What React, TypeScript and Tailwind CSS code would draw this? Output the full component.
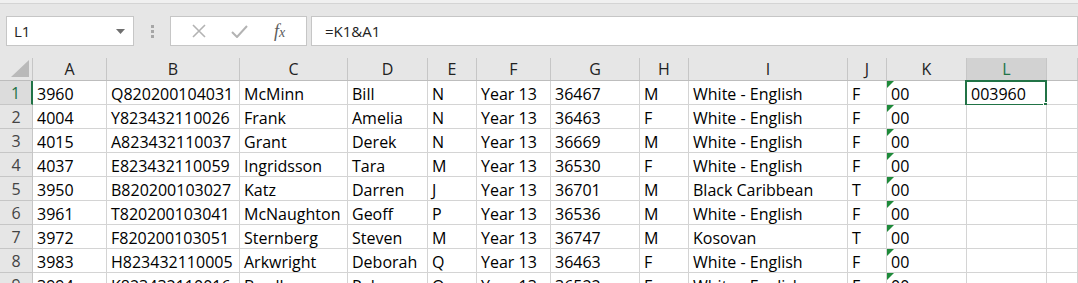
import type { ReactNode } from "react"

const cols = [
  { key: "A", w: "w-[74px]" },
  { key: "B", w: "w-[133px]" },
  { key: "C", w: "w-[108px]" },
  { key: "D", w: "w-[80px]" },
  { key: "E", w: "w-[49px]" },
  { key: "F", w: "w-[74px]" },
  { key: "G", w: "w-[89px]" },
  { key: "H", w: "w-[49px]" },
  { key: "I", w: "w-[159px]" },
  { key: "J", w: "w-[39px]" },
  { key: "K", w: "w-[80px]" },
  { key: "L", w: "w-[80px]" },
  { key: "M", w: "w-[31px]" },
]

const rows: string[][] = [
  ["3960", "Q820200104031", "McMinn", "Bill", "N", "Year 13", "36467", "M", "White - English", "F", "00", "003960", ""],
  ["4004", "Y823432110026", "Frank", "Amelia", "N", "Year 13", "36463", "F", "White - English", "F", "00", "", ""],
  ["4015", "A823432110037", "Grant", "Derek", "N", "Year 13", "36669", "M", "White - English", "F", "00", "", ""],
  ["4037", "E823432110059", "Ingridsson", "Tara", "M", "Year 13", "36530", "F", "White - English", "F", "00", "", ""],
  ["3950", "B820200103027", "Katz", "Darren", "J", "Year 13", "36701", "M", "Black Caribbean", "T", "00", "", ""],
  ["3961", "T820200103041", "McNaughton", "Geoff", "P", "Year 13", "36536", "M", "White - English", "F", "00", "", ""],
  ["3972", "F820200103051", "Sternberg", "Steven", "M", "Year 13", "36747", "M", "Kosovan", "T", "00", "", ""],
  ["3983", "H823432110005", "Arkwright", "Deborah", "Q", "Year 13", "36463", "F", "White - English", "F", "00", "", ""],
  ["3994", "K823432110016", "Bradley", "Rebecca", "Q", "Year 13", "36522", "F", "White - English", "F", "00", "", ""],
]

function Box({ className, children }: { className: string; children: ReactNode }) {
  return (
    <div className={`h-[30px] bg-white border border-[#c6c6c6] flex items-center ${className}`}>
      {children}
    </div>
  )
}

function ErrorMark() {
  return (
    <svg className="absolute left-0 top-0" width="7" height="7" viewBox="0 0 7 7">
      <polygon points="0,0 7,0 0,7" fill="#1e8a3a" />
    </svg>
  )
}

export default function App() {
  return (
    <div
      className="w-[1078px] h-[283px] overflow-hidden bg-[#e6e6e6] text-[#000]"
      style={{ fontFamily: '"Open Sans", "Liberation Sans", sans-serif' }}
    >
      {/* TOP STRIP */}
      <div className="h-[4px] bg-[#f0f0f0] border-b border-[#d4d4d4]" />

      {/* FORMULA BAR */}
      <div className="h-[54px] flex items-start pt-[12px] pl-[6px]">
        <Box className="w-[128px] shrink-0 justify-between pl-[7px] pr-[8px]">
          <span className="text-[15px] text-[#222]">L1</span>
          <svg width="9" height="5" viewBox="0 0 9 5">
            <polygon points="0,0 9,0 4.5,5" fill="#6f6f6f" />
          </svg>
        </Box>

        <div className="w-[36px] shrink-0 h-[30px] flex flex-col items-center justify-center gap-[2px]">
          <span className="w-[3px] h-[3px] bg-[#a6a6a6]" />
          <span className="w-[3px] h-[3px] bg-[#a6a6a6]" />
          <span className="w-[3px] h-[3px] bg-[#a6a6a6]" />
        </div>

        <Box className="w-[137px] shrink-0 justify-around px-[8px]">
          <svg width="14" height="14" viewBox="0 0 14 14">
            <path d="M1 1 L13 13 M13 1 L1 13" stroke="#b3b3b3" strokeWidth="1.6" />
          </svg>
          <svg width="17" height="13" viewBox="0 0 17 13">
            <path d="M1 7 L6 12 L16 1" stroke="#b3b3b3" strokeWidth="2" fill="none" />
          </svg>
          <span
            className="text-[18px] italic text-[#5b5b5b] leading-none"
            style={{ fontFamily: '"Liberation Serif", serif' }}
          >
            f<span className="text-[14px]">x</span>
          </span>
        </Box>

        <Box className="ml-[4px] flex-1 pl-[13px]">
          <span className="text-[15px] text-[#222]">=K1&amp;A1</span>
        </Box>
      </div>

      {/* GRID */}
      <div className="flex flex-col">

        {/* COLUMN HEADERS */}
        <div className="flex h-[23px] border-b border-[#bdbdbd]">
          <div className="w-[33px] shrink-0 relative border-r border-[#c6c6c6]">
            <svg className="absolute right-[3px] bottom-[3px]" width="18" height="17" viewBox="0 0 18 17">
              <polygon points="18,0 18,17 0,17" fill="#b9b9b9" />
            </svg>
          </div>
          {cols.map((c) => (
            <div
              key={c.key}
              className={`${c.w} shrink-0 flex items-center justify-center border-r border-[#c6c6c6] text-[16px] ${
                c.key === "L" ? "bg-[#d2d2d2] text-[#217346]" : "text-[#222]"
              }`}
            >
              {c.key === "M" ? "" : c.key}
            </div>
          ))}
        </div>

        {/* ROWS */}
        {rows.map((r, i) => (
          <div key={i} className="flex h-[24px]">
            <div
              className={`w-[33px] shrink-0 flex items-center justify-center pt-[1px] border-b border-[#c6c6c6] text-[16px] ${
                i === 0
                  ? "bg-[#dcdcdc] text-[#217346] border-r-2 border-r-[#217346]"
                  : "text-[#444] border-r border-r-[#c6c6c6]"
              }`}
            >
              {i + 1}
            </div>
            {cols.map((c, j) => (
              <div
                key={c.key}
                className={`${c.w} shrink-0 relative bg-white border-r border-b border-[#d4d4d4] pl-[4px] flex items-center pt-[3px] text-[16px] whitespace-nowrap`}
              >
                {c.key === "K" && <ErrorMark />}
                {r[j]}
                {i === 0 && c.key === "L" && (
                  <div className="absolute -left-[2px] -top-[1px] w-[82px] h-[26px] border-2 border-[#217346]">
                    <span className="absolute -right-[4px] -bottom-[4px] w-[6px] h-[6px] bg-[#217346] border border-white" />
                  </div>
                )}
              </div>
            ))}
          </div>
        ))}
      </div>
    </div>
  )
}
